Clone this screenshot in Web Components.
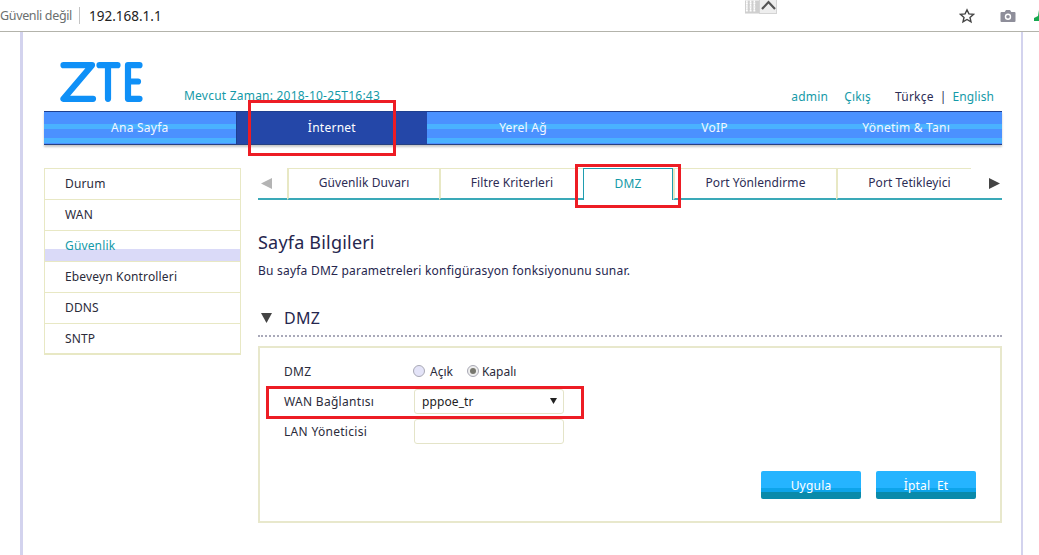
<!DOCTYPE html>
<html lang="tr">
<head>
<meta charset="utf-8">
<title>ZTE DMZ</title>
<style>
  html,body{margin:0;padding:0;background:#fff;}
  body{width:1039px;height:555px;overflow:hidden;position:relative;font-family:"Noto Sans","Open Sans",sans-serif;}
</style>
</head>
<body>
<zte-browser-bar url="192.168.1.1"></zte-browser-bar>
<zte-page>
  <zte-header slot="header"></zte-header>
  <zte-nav slot="nav">
    <zte-nav-item>Ana Sayfa</zte-nav-item>
    <zte-nav-item active>İnternet</zte-nav-item>
    <zte-nav-item>Yerel Ağ</zte-nav-item>
    <zte-nav-item>VoIP</zte-nav-item>
    <zte-nav-item>Yönetim &amp; Tanı</zte-nav-item>
  </zte-nav>
  <zte-sidebar slot="side">
    <zte-side-item>Durum</zte-side-item>
    <zte-side-item>WAN</zte-side-item>
    <zte-side-item active>Güvenlik</zte-side-item>
    <zte-side-item>Ebeveyn Kontrolleri</zte-side-item>
    <zte-side-item>DDNS</zte-side-item>
    <zte-side-item>SNTP</zte-side-item>
  </zte-sidebar>
  <zte-tabs slot="main">
    <zte-tab w="152">Güvenlik Duvarı</zte-tab>
    <zte-tab w="144">Filtre Kriterleri</zte-tab>
    <zte-tab w="90" active>DMZ</zte-tab>
    <zte-tab w="163">Port Yönlendirme</zte-tab>
    <zte-tab w="135" style="padding-left:10px">Port Tetikleyici</zte-tab>
  </zte-tabs>
  <zte-intro slot="main" title="Sayfa Bilgileri">Bu sayfa DMZ parametreleri konfigürasyon fonksiyonunu sunar.</zte-intro>
  <zte-section slot="main" title="DMZ"></zte-section>
  <zte-form slot="main">
    <zte-field label="DMZ">
      <zte-radio>Açık</zte-radio>
      <zte-radio checked>Kapalı</zte-radio>
    </zte-field>
    <zte-field label="WAN Bağlantısı"><zte-select>pppoe_tr</zte-select></zte-field>
    <zte-field label="LAN Yöneticisi"><zte-input></zte-input></zte-field>
    <zte-button slot="actions">Uygula</zte-button>
    <zte-button slot="actions">İptal&nbsp; Et</zte-button>
  </zte-form>
</zte-page>
<zte-mark style="left:248px;top:100px;width:142px;height:50px"></zte-mark>
<zte-mark style="left:575px;top:164px;width:100px;height:38px"></zte-mark>
<zte-mark style="left:266px;top:386px;width:312px;height:27px"></zte-mark>

<script>
function define(name, css, html, setup) {
  customElements.define(name, class extends HTMLElement {
    constructor() {
      super();
      this.attachShadow({mode:'open'}).innerHTML = '<style>' + css + '</style>' + html;
    }
    connectedCallback() { if (setup) setup(this, this.shadowRoot); }
  });
}

define('zte-browser-bar', `
  :host{display:flex;align-items:center;height:31px;border-bottom:1px solid #b3b3ab;position:relative;background:#fff;overflow:hidden;font-family:"Noto Sans",sans-serif;}
  .sec{font-size:12.5px;color:#6b6f6f;margin-left:0;white-space:nowrap;letter-spacing:-.35px;}
  .sep{width:1px;height:17px;background:#c4c4c4;margin:0 9px 0 7px;}
  .url{font-size:13.5px;color:#222;}
  .sp{flex:1;}
  .grid{position:absolute;left:745px;top:0;width:32px;height:14px;display:flex;}
  .grid i{width:18px;height:14px;background:#eee;border:1px solid #d4d4d4;border-top:0;box-sizing:border-box;}
  svg{display:block;}
  .star{margin-right:25px;}
  .cam{margin-right:17px;}
  .ext{margin-right:-10px;}
`, `
  <span class="sec">Güvenli değil</span><span class="sep"></span><span class="url" id="u"></span>
  <span class="sp"></span>
  <div class="grid">
    <svg width="15" height="14" viewBox="0 0 15 14"><rect width="15" height="14" fill="#cfcfcf"/><path d="M2 0v12M6 0v12M10 0v12M1 3h12M1 7h12M1 11h12" stroke="#fff" stroke-width="1.6" stroke-dasharray="2 2"/></svg>
    <i><svg width="17" height="12" viewBox="0 0 17 12"><path d="M2 9l6.500-7 6.500 7" fill="none" stroke="#555" stroke-width="2.200"/></svg></i>
  </div>
  <svg class="star" width="16" height="16" viewBox="0 0 16 16"><path d="M8 1.800l1.900 4.100 4.500.5-3.400 3 1 4.400L8 11.500l-4 2.300 1-4.400-3.400-3 4.500-.5z" fill="none" stroke="#444" stroke-width="1.400"/></svg>
  <svg class="cam" width="16" height="14" viewBox="0 0 16 14"><path d="M1.500 3h3.200L6 1h4l1.300 2h3.200a1 1 0 0 1 1 1v8a1 1 0 0 1-1 1h-13a1 1 0 0 1-1-1V4a1 1 0 0 1 1-1z" fill="#8e8e9a"/><circle cx="8" cy="7.700" r="3.200" fill="#fff"/><circle cx="8" cy="7.700" r="1.800" fill="#8e8e9a"/></svg>
  <svg class="ext" width="16" height="14" viewBox="0 0 16 14"><path d="M6 1h3v6l3 2v3H1V9l4-2z" fill="#16a84f"/></svg>
`, (el, r) => { r.getElementById('u').textContent = el.getAttribute('url'); });

define('zte-page', `
  :host{display:block;margin:0 16px 0 20px;height:523px;border-left:3px solid #d3d3ee;border-right:2px solid #d3d3ee;padding:0 19px 0 21px;box-sizing:border-box;overflow:hidden;color:#2d2d55;font-family:"Noto Sans",sans-serif;font-size:12px;}
  .body{display:flex;gap:17px;margin-top:23px;}
  .main{flex:1;min-width:0;}
`, `
  <slot name="header"></slot>
  <slot name="nav"></slot>
  <div class="body">
    <slot name="side"></slot>
    <div class="main"><slot name="main"></slot></div>
  </div>
`);

define('zte-header', `
  :host{display:flex;align-items:flex-end;height:79px;color:#149aa8;font-size:12px;letter-spacing:.22px;white-space:nowrap;}
  svg{display:block;margin:0 41px 9px 16px;flex:none;}
  .time{line-height:17px;margin-bottom:7px;}
  .sp{flex:1;}
  .links{display:flex;line-height:17px;margin:0 8px 6px 0;letter-spacing:.2px;}
  .a{margin-right:16px;}
  .b{margin-right:24px;}
  .t{color:#2d2d55;}
  .s{color:#2d2d55;margin:0 6px 0 6px;}
  .e{letter-spacing:.1px;}
`, `
  <svg width="83" height="40" viewBox="0 0 83 40" role="img" aria-label="ZTE">
    <path d="M3.500 3.200H32L3.500 36.800H33" fill="none" stroke="#0f90f7" stroke-width="6.200" stroke-linecap="round" stroke-linejoin="round"/>
    <path d="M39.500 3.200H57.500M48 3.200V36.800" fill="none" stroke="#0f90f7" stroke-width="6.200" stroke-linecap="round"/>
    <path d="M79.500 3.200H68V36.800H79.500M68 19.500H78" fill="none" stroke="#0f90f7" stroke-width="6.200" stroke-linecap="round" stroke-linejoin="round"/>
  </svg>
  <span class="time">Mevcut Zaman: 2018-10-25T16:43</span>
  <span class="sp"></span>
  <span class="links"><span class="a">admin</span><span class="b">Çıkış</span><span class="t">Türkçe</span><span class="s">|</span><span class="e">English</span></span>
`);

define('zte-nav', `
  :host{display:grid;grid-template-columns:repeat(5,1fr);height:34px;border-top:1px solid #1e3f8f;border-bottom:1px solid #27407f;box-sizing:border-box;box-shadow:0 2px 2px #c8c8c8;}
`, `<slot></slot>`);

define('zte-nav-item', `
  :host{display:flex;align-items:center;justify-content:center;color:#f2f6ff;font-size:12px;letter-spacing:.25px;background:linear-gradient(#4b91ff 0 12px,#4ab2ff 12px 17px,#4b91ff 17px 26px,#4ab2ff 26px 31px,#4b91ff 31px);box-sizing:border-box;}
  :host([active]){background:#2447a8;color:#fff;border-left:1px solid #1e3f8f;}
  span{position:relative;top:-1px;}
`, `<span><slot></slot></span>`);

define('zte-sidebar', `
  :host{display:block;width:197px;height:187px;flex:none;box-sizing:border-box;border:1px solid #e8e8c4;border-bottom-width:2px;}
  ::slotted(zte-side-item:last-child){border-bottom:0;}
`, `<slot></slot>`);

define('zte-side-item', `
  :host{display:block;height:31px;box-sizing:border-box;border-bottom:1px solid #e8e8c4;padding:0 0 0 20px;font-size:12px;line-height:29px;color:#2b2b3a;letter-spacing:.15px;position:relative;}
  :host([active]){color:#149aa8;background:linear-gradient(#fff 0 18px,#dadaf8 18px);}
`, `<slot></slot>`);

define('zte-tabs', `
  :host{display:flex;align-items:stretch;height:32px;box-sizing:border-box;border-bottom:2px solid #3aa9b8;position:relative;}
  .prev{width:29px;flex:none;display:flex;align-items:center;padding-left:3px;box-sizing:border-box;}
  .next{flex:1;display:flex;align-items:center;justify-content:flex-end;padding-right:2px;}
  .list{display:flex;margin-bottom:-2px;}
  svg{display:block;}
`, `
  <div class="prev"><svg width="11" height="11" viewBox="0 0 11 11"><path d="M11 0v11L0 5.500z" fill="#b4b4b4"/></svg></div>
  <div class="list"><slot></slot></div>
  <div class="next"><svg width="11" height="11" viewBox="0 0 11 11"><path d="M0 0v11l11-5.500z" fill="#444"/></svg></div>
`);

define('zte-tab', `
  :host{display:flex;align-items:center;justify-content:center;box-sizing:border-box;border-top:1px solid #e8e8c4;border-left:2px solid #e8e8c4;border-bottom:2px solid #3aa9b8;font-size:12px;letter-spacing:.1px;color:#2d2d55;padding-bottom:2px;}
  :host([active]){color:#149aa8;border:1px solid #1f9db0;border-bottom:0;background:#fff;}
`, `<slot></slot>`, el => { el.style.width = el.getAttribute('w') + 'px'; });

define('zte-intro', `
  :host{display:block;}
  h1{margin:29px 0 0;font-size:18px;line-height:26px;font-weight:400;color:#26264e;letter-spacing:.2px;}
  p{margin:7px 0 0;font-size:12px;line-height:17px;color:#26264e;letter-spacing:.22px;}
`, `<h1 id="t"></h1><p><slot></slot></p>`, (el, r) => { r.getElementById('t').textContent = el.getAttribute('title'); });

define('zte-section', `
  :host{display:flex;align-items:center;height:30px;margin-top:24px;padding-bottom:2px;border-bottom:2px dotted #a9a9b9;box-sizing:content-box;font-size:16px;color:#26264e;letter-spacing:.3px;}
  svg{display:block;margin:0 12px 0 3px;}
`, `<svg width="11" height="10" viewBox="0 0 11 10"><path d="M0 0h11L5.500 10z" fill="#444"/></svg><span id="t"></span>`,
  (el, r) => { r.getElementById('t').textContent = el.getAttribute('title'); });

define('zte-form', `
  :host{display:block;height:177px;margin-top:9px;box-sizing:border-box;border:2px solid #e8e8cc;padding:8px 24px 0 24px;}
  .rows{display:flex;flex-direction:column;}
  .actions{display:flex;justify-content:flex-end;gap:15px;margin-top:25px;}
`, `<div class="rows"><slot></slot></div><div class="actions"><slot name="actions"></slot></div>`);

define('zte-field', `
  :host{display:flex;align-items:center;height:30px;font-size:12px;color:#2b2b3a;letter-spacing:.3px;}
  .l{width:130px;flex:none;}
  .c{display:flex;align-items:center;}
`, `<span class="l" id="l"></span><span class="c"><slot></slot></span>`,
  (el, r) => { r.getElementById('l').textContent = el.getAttribute('label'); });

define('zte-radio', `
  :host{display:inline-flex;align-items:center;font-size:12px;color:#2b2b3a;letter-spacing:0;margin:0 14px 0 -1px;}
  i{display:block;width:12px;height:12px;margin-right:5px;border-radius:50%;border:1px solid #a9a9b5;background:#e4e4f8;box-sizing:border-box;position:relative;}
  :host([checked]) i{background:#eee;margin-right:3px;}
  :host([checked]) i::after{content:"";position:absolute;left:2px;top:2px;width:6px;height:6px;border-radius:50%;background:#77776e;}
  :host([checked]){margin:0;}
`, `<i></i><slot></slot>`);

define('zte-select', `
  :host{display:flex;align-items:center;justify-content:space-between;width:150px;height:25px;box-sizing:border-box;border:1px solid #e4e4c8;border-radius:3px;padding:0 6px 0 7px;font-size:12px;color:#222;letter-spacing:.1px;}
  svg{display:block;}
`, `<slot></slot><svg width="7" height="6" viewBox="0 0 7 6"><path d="M0 0h7L3.500 6z" fill="#222"/></svg>`);

define('zte-input', `
  :host{display:block;width:150px;height:25px;box-sizing:border-box;border:1px solid #e4e4c8;border-radius:3px;}
`, ``);

define('zte-button', `
  :host{display:block;width:100px;height:28px;box-sizing:border-box;border-radius:2px;background:linear-gradient(#25b4ff 0 17px,#0da4ea 17px 21px,#0a8aaa 21px);color:#fff;text-align:center;font-size:12px;line-height:29px;letter-spacing:.2px;}
`, `<slot></slot>`);

define('zte-mark', `
  :host{display:block;position:absolute;border:3px solid #ed1c24;box-sizing:content-box;pointer-events:none;}
`, ``);
</script>
</body>
</html>
